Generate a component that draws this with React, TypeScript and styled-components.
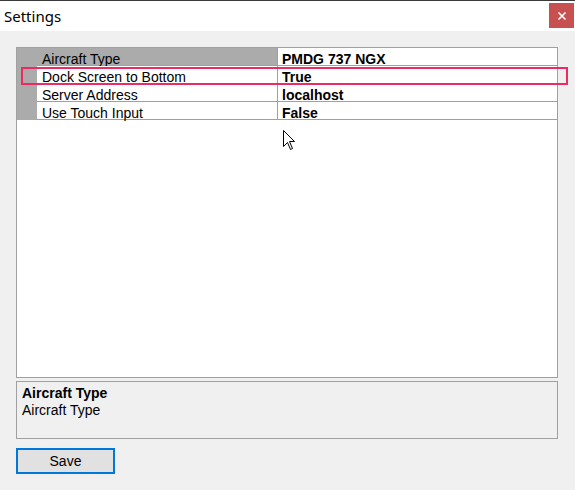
import styled, { createGlobalStyle } from "styled-components";

interface Setting {
  name: string,
  value: string,
}

const settings: Setting[] = [
  { name: "Aircraft Type", value: "PMDG 737 NGX" },
  { name: "Dock Screen to Bottom", value: "True" },
  { name: "Server Address", value: "localhost" },
  { name: "Use Touch Input", value: "False" },
];

const GlobalStyle = createGlobalStyle`
  html, body {
    margin: 0;
    padding: 0;
    background: #f0f0f0;
  }
  * {
    box-sizing: border-box;
  }
`;

const Window = styled.div`
  position: relative;
  width: 575px;
  height: 490px;
  overflow: hidden;
  background: #f0f0f0;
  font-family: "Liberation Sans", Arial, sans-serif;
  font-size: 14px;
  color: #000;
`;

const TitleBar = styled.div`
  display: flex;
  justify-content: space-between;
  align-items: flex-start;
  height: 31px;
  background: #ffffff;
  border-top: 1px solid #3a3a3a;
`;

const Title = styled.span`
  font-family: "Noto Sans", sans-serif;
  font-size: 15px;
  line-height: 30px;
  padding-left: 4px;
`;

const CloseButton = styled.button`
  display: flex;
  align-items: center;
  justify-content: center;
  width: 25px;
  height: 25px;
  margin: 2px 1px 0 0;
  padding: 0;
  border: none;
  background: #c75050;
  cursor: pointer;
`;

const Content = styled.div`
  display: flex;
  flex-direction: column;
  padding: 16px 17px 0 16px;
`;

const Grid = styled.div`
  height: 331px;
  border: 1px solid #a0a0a0;
  background: #ffffff;
`;

const Row = styled.div`
  display: grid;
  grid-template-columns: 20px 240px 1fr;
  height: 18px;
`;

const Margin = styled.div`
  background: #ababab;
`;

const NameCell = styled.div<{ $selected: boolean }>`
  padding: 5px 0 0 5px;
  line-height: 12px;
  white-space: nowrap;
  background: ${props => (props.$selected ? "#ababab" : "#ffffff")};
  border-bottom: 1px solid #a0a0a0;
`;

const ValueCell = styled.div`
  padding: 5px 0 0 4px;
  line-height: 12px;
  font-weight: bold;
  white-space: nowrap;
  border-left: 1px solid #a0a0a0;
  border-bottom: 1px solid #a0a0a0;
`;

const Description = styled.div`
  height: 58px;
  margin-top: 3px;
  padding: 3px 0 0 5px;
  border: 1px solid #a0a0a0;
  line-height: 17px;
`;

const DescTitle = styled.div`
  font-weight: bold;
`;

const SaveButton = styled.button`
  width: 99px;
  height: 26px;
  margin-top: 9px;
  padding: 0;
  border: 2px solid #0078d7;
  background: #e1e1e1;
  font-family: "Liberation Sans", Arial, sans-serif;
  font-size: 14px;
  color: #000;
`;

// red outline drawn over the second row
const Highlight = styled.div`
  position: absolute;
  left: 21px;
  top: 67px;
  width: 547px;
  height: 18px;
  border: 2px solid #ee2a62;
  pointer-events: none;
`;

const Pointer = styled.svg`
  position: absolute;
  left: 283px;
  top: 130px;
`;

function App() {
  return (
    <Window>
      <GlobalStyle />
      <TitleBar>
        <Title>Settings</Title>
        <CloseButton aria-label="Close">
          <svg width="10" height="10" viewBox="0 0 10 10">
            <path d="M1.5 1.5 L8.5 8.5 M8.5 1.5 L1.5 8.5" stroke="#ffffff" strokeWidth="1.6" />
          </svg>
        </CloseButton>
      </TitleBar>
      <Content>
        <Grid>
          {settings.map((s, i) => (
            <Row key={s.name}>
              <Margin />
              <NameCell $selected={i === 0}>{s.name}</NameCell>
              <ValueCell>{s.value}</ValueCell>
            </Row>
          ))}
        </Grid>
        <Description>
          <DescTitle>Aircraft Type</DescTitle>
          <div>Aircraft Type</div>
        </Description>
        <SaveButton>Save</SaveButton>
      </Content>
      <Highlight />
      <Pointer width="13" height="21" viewBox="0 0 13 21">
        <path
          d="M0.5 0.5 L0.5 16.5 L4.5 12.5 L7.5 19.5 L9.5 18.5 L6.5 11.5 L11.5 11.5 Z"
          fill="#ffffff"
          stroke="#000000"
          strokeWidth="1"
        />
      </Pointer>
    </Window>
  );
}

export default App;
